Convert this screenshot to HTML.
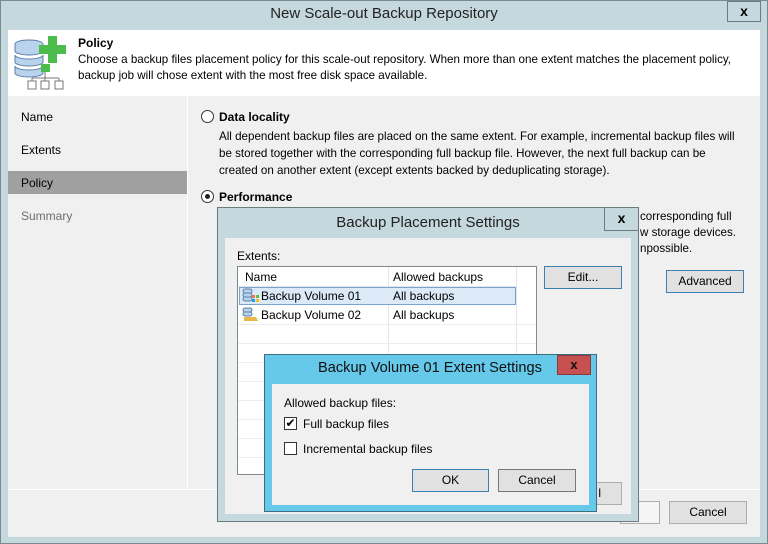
<!DOCTYPE html>
<html><head><meta charset="utf-8"><style>
*{margin:0;padding:0;box-sizing:border-box}
body{width:768px;height:544px;overflow:hidden;font-family:"Liberation Sans",sans-serif;font-size:12px;color:#000;background:#c5d8de;position:relative}
.a{position:absolute}
.btn{position:absolute;background:#e1e1e1;border:1px solid #adadad;text-align:center;line-height:21px;font-size:12px}
.btnb{border-color:#3c7fb1}
.t{font-size:11.6px}
</style></head><body>
<div class="a" style="left:0;top:0;width:768px;height:544px;border:1px solid #7a8a90"></div>
<div class="a" style="left:0;top:5px;width:768px;text-align:center;font-size:15px;color:#222">New Scale-out Backup Repository</div>
<div class="a" style="left:727px;top:1px;width:34px;height:21px;border:1px solid #6d7a80;text-align:center;font-weight:bold;font-size:14px;line-height:19px">x</div>
<div class="a" style="left:8px;top:30px;width:752px;height:507px;background:#f0f0f0"></div>
<div class="a" style="left:8px;top:30px;width:752px;height:66px;background:#fff"></div>
<svg class="a" style="left:12px;top:34px" width="56" height="58">
<g fill="#b9d3ec" stroke="#5a7fa8" stroke-width="1"><path d="M3 10a14 4 0 0 1 28 0v7a14 4 0 0 1 -28 0z"/><path d="M3 21a14 4 0 0 0 28 0v7a14 4 0 0 1 -28 0z"/><path d="M3 32a14 4 0 0 0 28 0v7a14 4 0 0 1 -28 0z"/></g>
<path d="M36 2h9v9h9v9h-9v9h-9v-9h-9v-9h9z" fill="#4cbc4c"/><rect x="29" y="30" width="9" height="8" fill="#4cbc4c"/>
<g fill="#fff" stroke="#777"><path d="M33 38v6M20 44h27M20 44v3M33 44v3M47 44v3" fill="none"/><rect x="16" y="47" width="8" height="8"/><rect x="29" y="47" width="8" height="8"/><rect x="43" y="47" width="8" height="8"/></g>
</svg>
<div class="a" style="left:78px;top:36px;font-weight:bold">Policy</div>
<div class="a t" style="left:78px;top:52px;line-height:16px;width:680px">Choose a backup files placement policy for this scale-out repository. When more than one extent matches the placement policy,<br>backup job will chose extent with the most free disk space available.</div>
<div class="a" style="left:187px;top:96px;width:1px;height:393px;background:#fff"></div>
<div class="a" style="left:21px;top:110px">Name</div>
<div class="a" style="left:21px;top:143px">Extents</div>
<div class="a" style="left:8px;top:171px;width:179px;height:23px;background:#a0a0a0"></div>
<div class="a" style="left:21px;top:176px">Policy</div>
<div class="a" style="left:21px;top:209px;color:#6d6d6d">Summary</div>
<div class="a" style="left:201px;top:110px;width:13px;height:13px;border:1px solid #333;border-radius:50%;background:#fff"></div>
<div class="a" style="left:219px;top:110px;font-weight:bold">Data locality</div>
<div class="a t" style="left:219px;top:128px;line-height:17px;width:540px">All dependent backup files are placed on the same extent. For example, incremental backup files will<br>be stored together with the corresponding full backup file. However, the next full backup can be<br>created on another extent (except extents backed by deduplicating storage).</div>
<div class="a" style="left:201px;top:190px;width:13px;height:13px;border:1px solid #333;border-radius:50%;background:#fff"><div class="a" style="left:3px;top:3px;width:5px;height:5px;border-radius:50%;background:#222"></div></div>
<div class="a" style="left:219px;top:190px;font-weight:bold">Performance</div>
<div class="a t" style="left:640px;top:209px;line-height:16px;width:120px;overflow:hidden;white-space:nowrap">corresponding full<br>w storage devices.<br>npossible.</div>
<div class="btn btnb" style="left:666px;top:270px;width:78px;height:23px">Advanced</div>
<div class="a" style="left:8px;top:489px;width:752px;height:1px;background:#fff"></div>
<div class="btn" style="left:620px;top:501px;width:40px;height:23px;background:#f5f5f5"></div>
<div class="btn" style="left:669px;top:501px;width:78px;height:23px">Cancel</div>

<div class="a" style="left:217px;top:207px;width:422px;height:315px;background:#c5d8de;border:1px solid #6d7a80"></div>
<div class="a" style="left:217px;top:214px;width:422px;text-align:center;font-size:15px;color:#222">Backup Placement Settings</div>
<div class="a" style="left:604px;top:207px;width:35px;height:24px;border:1px solid #6d7a80;text-align:center;font-weight:bold;font-size:14px;line-height:21px">x</div>
<div class="a" style="left:225px;top:238px;width:406px;height:276px;background:#f0f0f0"></div>
<div class="a" style="left:237px;top:249px">Extents:</div>
<div class="a" style="left:237px;top:266px;width:300px;height:209px;background:#fff;border:1px solid #828790;overflow:hidden">
<div class="a" style="left:0;top:0;width:278px;height:20px;border-bottom:1px solid #e5e5e5"></div>
<div class="a" style="left:150px;top:0;width:1px;height:209px;background:#e5e5e5"></div>
<div class="a" style="left:278px;top:0;width:1px;height:209px;background:#e5e5e5"></div>
<div class="a" style="left:7px;top:3px">Name</div><div class="a" style="left:155px;top:3px">Allowed backups</div>
<div class="a" style="left:1px;top:20px;width:277px;height:18px;background:#dceaf8;border:1px solid #7da2ce"></div>
<svg class="a" style="left:4px;top:21px" width="18" height="16"><g fill="#b9d3ec" stroke="#5a7fa8"><rect x="1" y="1" width="9" height="4" rx="2"/><rect x="1" y="5" width="9" height="4" rx="2"/><rect x="1" y="9" width="9" height="4" rx="2"/></g><rect x="10" y="7" width="3" height="3" fill="#e74"/><rect x="14" y="7" width="3" height="3" fill="#6b4"/><rect x="10" y="11" width="3" height="3" fill="#29d"/><rect x="14" y="11" width="3" height="3" fill="#fb2"/></svg>
<div class="a" style="left:23px;top:22px">Backup Volume 01</div><div class="a" style="left:155px;top:22px">All backups</div>
<svg class="a" style="left:4px;top:40px" width="18" height="16"><g fill="#b9d3ec" stroke="#5a7fa8"><rect x="1" y="1" width="9" height="4" rx="2"/><rect x="1" y="5" width="9" height="4" rx="2"/></g><path d="M2 10h12l2 4H2z" fill="#e8b84a"/></svg>
<div class="a" style="left:23px;top:41px">Backup Volume 02</div><div class="a" style="left:155px;top:41px">All backups</div>
<div class="a" style="left:0;top:57px;width:300px;height:1px;background:#eee"></div>
<div class="a" style="left:0;top:76px;width:300px;height:1px;background:#eee"></div>
<div class="a" style="left:0;top:95px;width:300px;height:1px;background:#eee"></div>
<div class="a" style="left:0;top:114px;width:300px;height:1px;background:#eee"></div>
<div class="a" style="left:0;top:133px;width:300px;height:1px;background:#eee"></div>
<div class="a" style="left:0;top:152px;width:300px;height:1px;background:#eee"></div>
<div class="a" style="left:0;top:171px;width:300px;height:1px;background:#eee"></div>
<div class="a" style="left:0;top:190px;width:300px;height:1px;background:#eee"></div>
</div>
<div class="btn btnb" style="left:544px;top:266px;width:78px;height:23px">Edit...</div>
<div class="btn" style="left:560px;top:482px;width:62px;height:23px;text-align:right;padding-right:20px">l</div>

<div class="a" style="left:264px;top:354px;width:333px;height:158px;background:#66c9ea;border:1px solid #3a6e80"></div>
<div class="a" style="left:318px;top:360px;font-size:14.6px;color:#111">Backup Volume 01 Extent Settings</div>
<div class="a" style="left:557px;top:355px;width:34px;height:20px;background:#c75050;border:1px solid #8a3a3a;text-align:center;font-weight:bold;font-size:13px;line-height:17px;color:#111">x</div>
<div class="a" style="left:272px;top:384px;width:317px;height:121px;background:#f0f0f0"></div>
<div class="a" style="left:284px;top:396px">Allowed backup files:</div>
<div class="a" style="left:284px;top:417px;width:13px;height:13px;border:1px solid #333;background:#fff;font-size:12px;line-height:11px;text-align:center">✔</div>
<div class="a" style="left:303px;top:417px">Full backup files</div>
<div class="a" style="left:284px;top:442px;width:13px;height:13px;border:1px solid #333;background:#fff"></div>
<div class="a" style="left:303px;top:442px">Incremental backup files</div>
<div class="btn btnb" style="left:412px;top:469px;width:77px;height:23px">OK</div>
<div class="btn" style="left:498px;top:469px;width:78px;height:23px;border-color:#777">Cancel</div>
</body></html>
